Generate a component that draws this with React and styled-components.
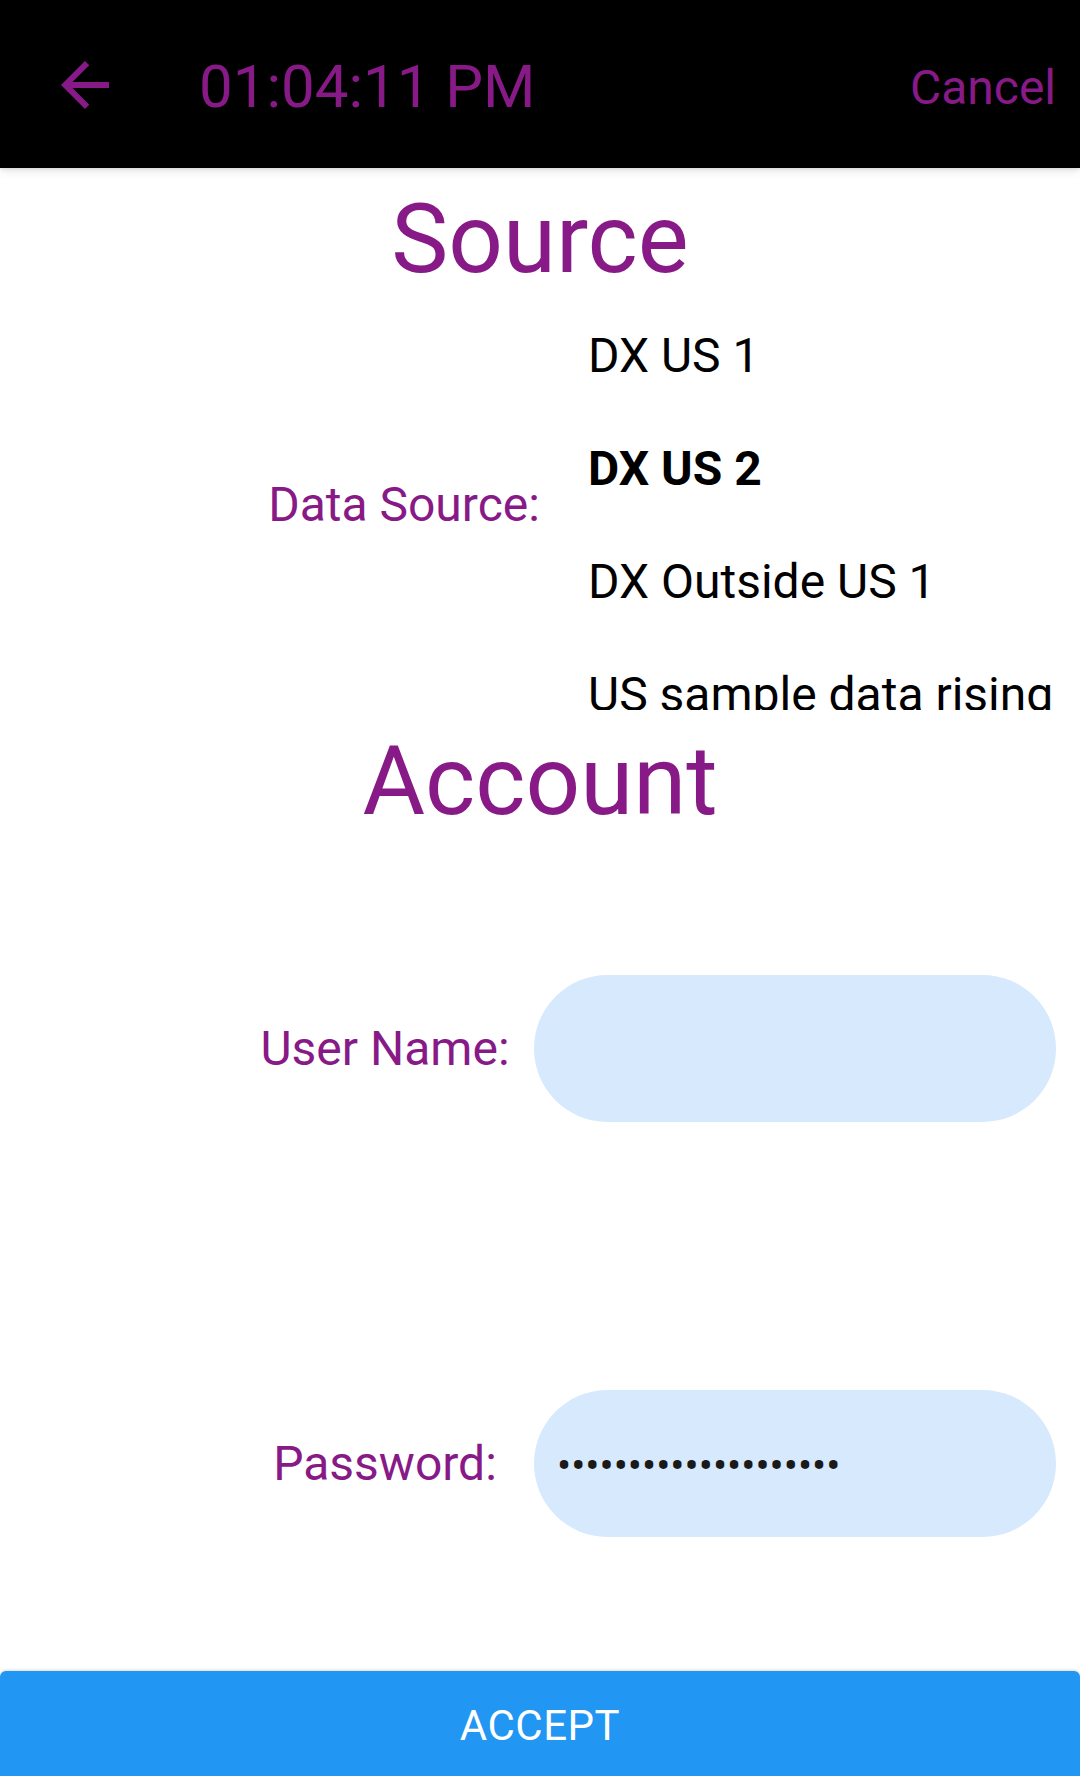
import React from "react";
import styled, { createGlobalStyle } from "styled-components";

const Global = createGlobalStyle`
  html, body { margin: 0; padding: 0; background: #ffffff; overflow: hidden; }
  body { font-family: Roboto, "Noto Sans", "Liberation Sans", sans-serif; }
  * { box-sizing: border-box; }
`;

const PURPLE = "#871a86";

const Page = styled.div`
  width: 1080px;
  height: 1776px;
  display: flex;
  flex-direction: column;
  background: #fff;
`;

const Header = styled.header`
  position: relative;
  z-index: 1;
  height: 168px;
  flex: 0 0 168px;
  background: #000;
  display: flex;
  align-items: center;
  padding: 0 24px 0 49px;
  box-shadow: 0 2px 10px rgba(0, 0, 0, 0.12), 0 1px 3px rgba(0, 0, 0, 0.1);
`;

const BackButton = styled.button`
  width: 72px;
  height: 72px;
  padding: 0;
  border: 0;
  background: transparent;
  display: flex;
  color: ${PURPLE};
  margin-top: 2px;
`;

const Clock = styled.div`
  margin-left: 78px;
  font-size: 60px;
  color: ${PURPLE};
  line-height: 1;
  margin-top: 6px;
`;

const CancelButton = styled.button`
  margin-left: auto;
  padding: 0;
  border: 0;
  background: transparent;
  font-family: inherit;
  font-size: 48px;
  color: ${PURPLE};
  line-height: 1;
  margin-top: 7px;
`;

const Title = styled.h1`
  margin: ${(p) => p.$top}px 0 0;
  font-size: 96px;
  font-weight: 400;
  line-height: 96px;
  height: 96px;
  text-align: center;
  color: ${PURPLE};
`;

const Row = styled.div`
  display: flex;
  align-items: center;
  padding: 0 24px 0 236px;
  margin-top: ${(p) => p.$top}px;
  height: ${(p) => p.$height}px;
`;

const Label = styled.div`
  flex: 1;
  text-align: center;
  font-size: 48px;
  color: ${PURPLE};
  white-space: nowrap;
`;

const Picker = styled.div`
  width: 484px;
  height: 411px;
  overflow: hidden;
  padding-left: 16px;
`;

const PickerItem = styled.div`
  height: 113px;
  line-height: 113px;
  font-size: 48px;
  color: #000;
  white-space: nowrap;
  font-weight: ${(p) => (p.$selected ? 700 : 400)};
`;

const Field = styled.input`
  width: 522px;
  height: 147px;
  border: 0;
  outline: none;
  border-radius: 74px;
  background: #d6e9fd;
  padding: 4px 23px 0;
  font-family: Roboto, sans-serif;
  font-size: 42px;
  color: #1a1a1a;
`;

const AcceptButton = styled.button`
  margin-top: auto;
  height: 109px;
  flex: 0 0 109px;
  border: 0;
  border-radius: 6px 6px 0 0;
  background: #2196f3;
  color: #fff;
  font-family: inherit;
  font-size: 42px;
  letter-spacing: 0.5px;
  margin-bottom: -4px;
  box-shadow: 0 -1px 3px rgba(0, 0, 0, 0.15);
`;

const sources = ["DX US 1", "DX US 2", "DX Outside US 1", "US sample data rising"];

export default function App() {
  return (
    <Page>
      <Global />
      <Header>
        <BackButton aria-label="Back">
          <svg width="72" height="72" viewBox="0 0 24 24" fill="currentColor">
            <path d="M20 11H7.83l5.59-5.59L12 4l-8 8 8 8 1.41-1.41L7.83 13H20v-2z" />
          </svg>
        </BackButton>
        <Clock>01:04:11 PM</Clock>
        <CancelButton>Cancel</CancelButton>
      </Header>

      <Title $top={23}>Source</Title>
      <Row $top={12} $height={411}>
        <Label>Data Source:</Label>
        <Picker>
          {sources.map((s, i) => (
            <PickerItem key={s} $selected={i === 1}>
              {s}
            </PickerItem>
          ))}
        </Picker>
      </Row>

      <Title $top={23}>Account</Title>
      <Row $top={146} $height={147}>
        <Label>User Name:</Label>
        <Field type="text" defaultValue="" />
      </Row>
      <Row $top={268} $height={147}>
        <Label>Password:</Label>
        <Field type="password" defaultValue="aaaaaaaaaaaaaaaaaaaa" />
      </Row>

      <AcceptButton>ACCEPT</AcceptButton>
    </Page>
  );
}
